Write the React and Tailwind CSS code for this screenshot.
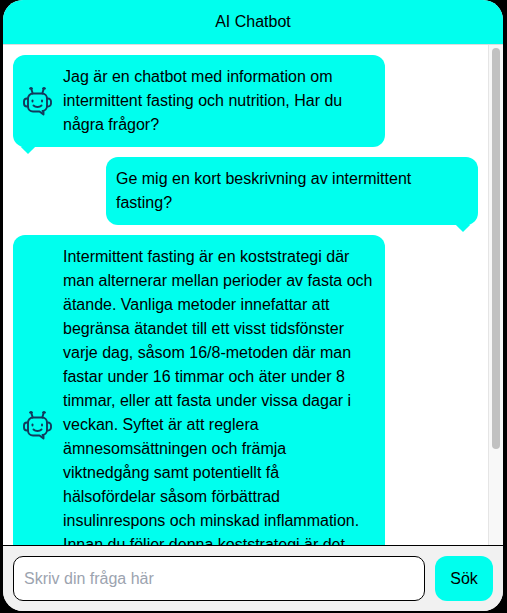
function BotIcon() {
  return (
    <svg className="w-[30px] h-[30px] shrink-0" viewBox="0 0 30 30" fill="none" stroke="#123a5c" strokeWidth="1.9" strokeLinecap="round" strokeLinejoin="round">
      <path d="M10 7.5H19A5 5 0 0 1 24 12.5V20A5 5 0 0 1 19.5 25H20.5V28.5L16.5 25.5H10A5 5 0 0 1 5 20.5V12.5A5 5 0 0 1 10 7.5Z" />
      <path d="M9.5 7.5C9.5 5.5 8.5 4 8 2" />
      <path d="M19.5 7.5C19.5 5.5 20.5 4 21 2" />
      <path d="M7 2.5H9" />
      <path d="M20 2.5H22" />
      <path d="M5 12.5H4A3 3 0 0 0 1 15.5V17.5A3 3 0 0 0 4 20.5H5" />
      <path d="M24 12.5H25A3 3 0 0 1 28 15.5V17.5A3 3 0 0 1 25 20.5H24" />
      <path d="M9.5 14.5V15.5" />
      <path d="M19 14.5V15.5" />
      <path d="M10.5 19.5C12.5 21.5 16.5 21.5 18.5 19.5" />
    </svg>
  );
}

function BotMessage({ children }) {
  return (
    <div className="relative w-[372px] flex items-center gap-[10px] bg-[#00ffee] rounded-[12px] p-[10px] shrink-0">
      <BotIcon />
      <p className="flex-1">{children}</p>
      <div className="absolute left-[10px] -bottom-[5px] w-[10px] h-[10px] rotate-45 bg-[#00ffee]" />
    </div>
  );
}

function UserMessage({ children }) {
  return (
    <div className="relative w-[372px] self-end bg-[#00ffee] rounded-[12px] p-[10px] shrink-0">
      <p>{children}</p>
      <div className="absolute right-[10px] -bottom-[5px] w-[10px] h-[10px] rotate-45 bg-[#00ffee]" />
    </div>
  );
}

export default function App() {
  return (
    <div className="w-[507px] h-[613px] bg-black pl-[3px] pr-[4px] pb-[2px] font-['Liberation_Sans',Arial,sans-serif] text-[16px] leading-[24px] text-black">
      <div className="h-full rounded-[20px] overflow-hidden bg-[#f1f1f1] flex flex-col">
        <header className="h-[45px] shrink-0 bg-[#00ffee] border-b border-[#dddddd] flex items-center justify-center">
          AI Chatbot
        </header>

        <div className="flex-1 min-h-0 flex bg-white">
          <div className="flex-1 min-w-0 overflow-hidden flex flex-col gap-[10px] pt-[10px] pl-[10px] pr-[10px]">
            <BotMessage>Jag är en chatbot med information om intermittent fasting och nutrition, Har du några frågor?</BotMessage>
            <UserMessage>Ge mig en kort beskrivning av intermittent fasting?</UserMessage>
            <BotMessage>
              Intermittent fasting är en koststrategi där man alternerar mellan perioder av fasta och ätande. Vanliga metoder innefattar att begränsa ätandet till ett visst tidsfönster varje dag, såsom 16/8-metoden där man fastar under 16 timmar och äter under 8 timmar, eller att fasta under vissa dagar i veckan. Syftet är att reglera ämnesomsättningen och främja viktnedgång samt potentiellt få hälsofördelar såsom förbättrad insulinrespons och minskad inflammation. Innan du följer denna koststrategi är det viktigt att rådgöra med en läkare eller en dietist.
            </BotMessage>
          </div>
          <div className="w-[15px] shrink-0 bg-[#f8f8f8] border-l border-[#e5e5e5] pt-[3px] pl-[3px]">
            <div className="w-[8px] h-[401px] rounded-full bg-[#c1c1c1]" />
          </div>
        </div>

        <form className="h-[66px] shrink-0 bg-[#f1f1f1] border-t border-black flex gap-[10px] p-[10px]">
          <input
            placeholder="Skriv din fråga här"
            className="flex-1 min-w-0 h-[45px] bg-white border border-black rounded-[10px] px-[10px] outline-none placeholder:text-[#9ca3af]"
          />
          <button type="button" className="w-[58px] h-[45px] bg-[#00ffee] rounded-[12px]">Sök</button>
        </form>
      </div>
    </div>
  );
}
